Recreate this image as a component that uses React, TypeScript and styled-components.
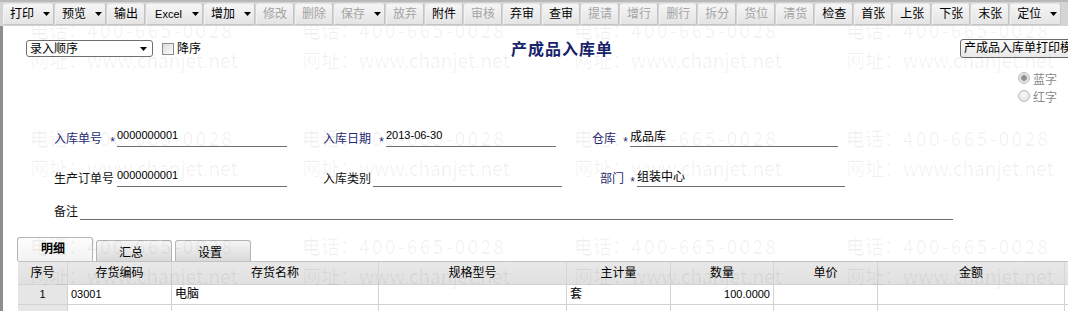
import React from 'react';
import styled, { createGlobalStyle } from 'styled-components';

const GlobalStyle = createGlobalStyle`
  html, body {
    margin: 0;
    padding: 0;
    background: #fff;
  }
  body {
    font-family: "Liberation Sans", "Noto Sans CJK SC", sans-serif;
    font-size: 12px;
    color: #000;
  }
`;

const Page = styled.div`
  position: relative;
  width: 1068px;
  height: 311px;
  overflow: hidden;
  background: #fff;
`;

/* ---------- toolbar ---------- */

const Toolbar = styled.div`
  position: relative;
  z-index: 2;
  display: flex;
  gap: 1px;
  height: 22px;
  padding: 3px 0 1px 3px;
  background: linear-gradient(#b9b9b9 0 2px, #d4d4d4 2px);
  white-space: nowrap;
`;

const ToolButton = styled.div<{ $disabled?: boolean; $arrow?: boolean }>`
  flex: none;
  display: flex;
  align-items: center;
  box-sizing: border-box;
  height: 22px;
  padding: 0 ${p => (p.$arrow ? 3 : 6)}px 0 6px;
  border: 1px solid #c4c4c4;
  border-top-color: #e4e4e4;
  border-left-color: #f2f2f2;
  border-radius: 3px 3px 2px 2px;
  background: linear-gradient(#f6f6f6, #e4e4e4);
  color: ${p => (p.$disabled ? '#a4a4a4' : '#000')};
  line-height: 14px;
`;

const ToolText = styled.span<{ $latin?: boolean }>`
  font-size: ${p => (p.$latin ? 11 : 12)}px;
  margin: ${p => (p.$latin ? '0 1px 0 2px' : '0')};
`;

const ArrowIcon = styled.svg`
  flex: none;
  margin-left: 9px;
`;

const Arrow = () => (
  <ArrowIcon width="7" height="4" viewBox="0 0 7 4">
    <path d="M0 0h7L3.5 4z" fill="#000" />
  </ArrowIcon>
);

/* ---------- body ---------- */

const Body = styled.div`
  height: 285px;
  border-left: 3px solid #8e8e8e;
  display: flex;
  flex-direction: column;
`;

const HeaderRow = styled.div`
  display: grid;
  grid-template-columns: 484px 450px 1fr;
  align-items: center;
  height: 20px;
  margin-top: 13px;
  padding-left: 23px;
  white-space: nowrap;
`;

const LeftGroup = styled.div`
  display: flex;
  align-items: center;
`;

const SelectBox = styled.div`
  display: flex;
  align-items: center;
  justify-content: space-between;
  box-sizing: border-box;
  width: 127px;
  height: 17px;
  padding-left: 3px;
  border: 1px solid #6f6f6f;
  border-radius: 3px;
  background: #fff;
  line-height: 14px;
  svg {
    margin-right: 5px;
  }
`;

const CheckBox = styled.span`
  display: inline-block;
  box-sizing: border-box;
  width: 12px;
  height: 12px;
  margin-left: 9px;
  border: 1px solid #8c8c8c;
  background: linear-gradient(135deg, #dcdcdc, #fbfbfb);
`;

const CheckLabel = styled.span`
  margin-left: 3px;
  line-height: 14px;
`;

const Title = styled.div`
  font-family: "Noto Sans CJK SC", sans-serif;
  font-size: 16px;
  font-weight: 700;
  letter-spacing: 1px;
  color: #17236b;
  line-height: 20px;
  padding-left: 1px;
  margin-top: -1px;
`;

const TemplateButton = styled.div`
  box-sizing: border-box;
  width: 130px;
  height: 19px;
  padding-left: 3px;
  border: 1px solid #6a6a6a;
  border-radius: 3px;
  background: linear-gradient(#fafafa, #e9e9e9);
  line-height: 17px;
  white-space: nowrap;
  overflow: hidden;
`;

const RadioGroup = styled.div`
  align-self: flex-end;
  display: flex;
  flex-direction: column;
  margin-top: 11px;
  margin-right: 11px;
`;

const RadioRow = styled.div`
  display: flex;
  align-items: center;
  height: 18px;
  color: #8a8a8a;
`;

const RadioDot = styled.span<{ $checked?: boolean }>`
  display: inline-block;
  box-sizing: border-box;
  width: 12px;
  height: 12px;
  margin-right: 3px;
  border-radius: 50%;
  border: 1px solid #bdbdbd;
  background: ${p =>
    p.$checked
      ? 'radial-gradient(circle, #8f8f8f 0 2.5px, #d6d6d6 3px, #f4f4f4 6px)'
      : 'radial-gradient(circle at 50% 40%, #fbfbfb, #dadada)'};
`;

/* ---------- form fields ---------- */

const FormArea = styled.div`
  display: flex;
  flex-direction: column;
  margin-top: 24px;
`;

const FormRow = styled.div<{ $gap: number }>`
  display: grid;
  grid-template-columns: 269px 269px auto;
  height: 18px;
  padding-left: 51px;
  margin-top: ${p => p.$gap}px;
`;

const Field = styled.div<{ $indent?: number; $span?: boolean }>`
  display: flex;
  align-items: flex-end;
  padding-left: ${p => p.$indent || 0}px;
  grid-column: ${p => (p.$span ? '1 / -1' : 'auto')};
`;

const FieldLabel = styled.div<{ $w: number; $req?: boolean }>`
  display: flex;
  justify-content: space-between;
  width: ${p => p.$w}px;
  flex: none;
  line-height: 14px;
  padding-bottom: 1px;
  white-space: nowrap;
  color: ${p => (p.$req ? '#1f2b72' : '#111')};
`;

const Star = styled.span`
  color: #1f2b72;
  margin-right: 2px;
  position: relative;
  top: 3px;
`;

const FieldInput = styled.div<{ $w: number }>`
  flex: none;
  box-sizing: border-box;
  width: ${p => p.$w}px;
  height: 18px;
  border-bottom: 1px solid #6e6e6e;
  font-size: 11px;
  line-height: 12px;
  white-space: nowrap;
  span.cjk {
    font-size: 12px;
    line-height: 16px;
  }
`;

/* ---------- tabs & grid ---------- */

const TabBar = styled.div`
  display: flex;
  align-items: flex-end;
  gap: 3px;
  height: 24px;
  margin-top: 17px;
  padding-left: 14px;
`;

const Tab = styled.div<{ $active?: boolean }>`
  box-sizing: border-box;
  width: 76px;
  height: ${p => (p.$active ? 24 : 21)}px;
  padding: ${p => (p.$active ? '4px 0 0 23px' : '5px 0 0 22px')};
  border: 1px solid #b4b4b4;
  border-bottom: none;
  border-radius: 3px 3px 0 0;
  background: ${p =>
    p.$active ? 'linear-gradient(#fdfdfd, #f2f2f2)' : 'linear-gradient(#f6f6f6, #d9d9d9)'};
  font-weight: ${p => (p.$active ? 700 : 400)};
  line-height: 14px;
`;

const COLS = '50px 104px 207px 188px 104px 103px 104px 187px 1fr';

const Grid = styled.div`
  margin-left: 15px;
  border-top: 1px solid #c2c2c2;
`;

const GridRow = styled.div<{ $header?: boolean }>`
  display: grid;
  grid-template-columns: ${COLS};
  height: ${p => (p.$header ? 23 : 20)}px;
  background: ${p => (p.$header ? 'linear-gradient(#e8e8e8, #e0e0e0)' : '#fff')};
`;

const Cell = styled.div<{ $align?: 'left' | 'center' | 'right'; $shade?: boolean; $header?: boolean }>`
  box-sizing: border-box;
  padding: 0 3px;
  border-right: 1px solid ${p => (p.$header ? '#d6d6d6' : '#d3d3d3')};
  border-bottom: 1px solid #d3d3d3;
  background: ${p => (p.$shade ? '#e6e6e6' : 'transparent')};
  text-align: ${p => p.$align || 'left'};
  line-height: ${p => (p.$header ? 22 : 19)}px;
  white-space: nowrap;
  overflow: hidden;
`;

const Num = styled.span`
  font-size: 11px;
`;

/* ---------- watermark ---------- */

const Watermark = styled.div`
  position: absolute;
  inset: 0;
  z-index: 1;
  pointer-events: none;
  display: grid;
  grid-template-columns: repeat(4, 272px);
  grid-auto-rows: 108px;
  padding: 15px 0 0 30px;
  font-family: "Noto Sans CJK SC", sans-serif;
  font-size: 19px;
  line-height: 30px;
  color: rgba(0, 0, 0, 0.06);
  white-space: nowrap;
`;

const MarkDigits = styled.span`
  letter-spacing: 2.4px;
`;

const tools: { label: string; disabled?: boolean; arrow?: boolean; latin?: boolean }[] = [
  { label: '打印', arrow: true },
  { label: '预览', arrow: true },
  { label: '输出' },
  { label: 'Excel', arrow: true, latin: true },
  { label: '增加', arrow: true },
  { label: '修改', disabled: true },
  { label: '删除', disabled: true },
  { label: '保存', arrow: true, disabled: true },
  { label: '放弃', disabled: true },
  { label: '附件' },
  { label: '审核', disabled: true },
  { label: '弃审' },
  { label: '查审' },
  { label: '提请', disabled: true },
  { label: '增行', disabled: true },
  { label: '删行', disabled: true },
  { label: '拆分', disabled: true },
  { label: '货位', disabled: true },
  { label: '清货', disabled: true },
  { label: '检查' },
  { label: '首张' },
  { label: '上张' },
  { label: '下张' },
  { label: '末张' },
  { label: '定位', arrow: true },
];

const headers = ['序号', '存货编码', '存货名称', '规格型号', '主计量', '数量', '单价', '金额', ''];

export default function App() {
  return (
    <Page>
      <GlobalStyle />
      <Toolbar>
        {tools.map(t => (
          <ToolButton key={t.label} $disabled={t.disabled} $arrow={t.arrow}>
            <ToolText $latin={t.latin}>{t.label}</ToolText>
            {t.arrow && <Arrow />}
          </ToolButton>
        ))}
      </Toolbar>

      <Body>
        <HeaderRow>
          <LeftGroup>
            <SelectBox>
              录入顺序
              <svg width="7" height="4" viewBox="0 0 7 4">
                <path d="M0 0h7L3.5 4z" fill="#000" />
              </svg>
            </SelectBox>
            <CheckBox />
            <CheckLabel>降序</CheckLabel>
          </LeftGroup>
          <Title>产成品入库单</Title>
          <TemplateButton>产成品入库单打印模版</TemplateButton>
        </HeaderRow>

        <RadioGroup>
          <RadioRow>
            <RadioDot $checked />
            蓝字
          </RadioRow>
          <RadioRow>
            <RadioDot />
            红字
          </RadioRow>
        </RadioGroup>

        <FormArea>
          <FormRow $gap={0}>
            <Field>
              <FieldLabel $w={63} $req>
                入库单号<Star>*</Star>
              </FieldLabel>
              <FieldInput $w={170}>0000000001</FieldInput>
            </Field>
            <Field>
              <FieldLabel $w={63} $req>
                入库日期<Star>*</Star>
              </FieldLabel>
              <FieldInput $w={170}>2013-06-30</FieldInput>
            </Field>
            <Field>
              <FieldLabel $w={38} $req>
                仓库<Star>*</Star>
              </FieldLabel>
              <FieldInput $w={208}>
                <span className="cjk">成品库</span>
              </FieldInput>
            </Field>
          </FormRow>
          <FormRow $gap={22}>
            <Field>
              <FieldLabel $w={63}>生产订单号</FieldLabel>
              <FieldInput $w={170}>0000000001</FieldInput>
            </Field>
            <Field>
              <FieldLabel $w={50}>入库类别</FieldLabel>
              <FieldInput $w={189} />
            </Field>
            <Field $indent={8}>
              <FieldLabel $w={37} $req>
                部门<Star>*</Star>
              </FieldLabel>
              <FieldInput $w={208}>
                <span className="cjk">组装中心</span>
              </FieldInput>
            </Field>
          </FormRow>
          <FormRow $gap={15}>
            <Field $span>
              <FieldLabel $w={26}>备注</FieldLabel>
              <FieldInput $w={873} />
            </Field>
          </FormRow>
        </FormArea>

        <TabBar>
          <Tab $active>明细</Tab>
          <Tab>汇总</Tab>
          <Tab>设置</Tab>
        </TabBar>

        <Grid>
          <GridRow $header>
            {headers.map((h, i) => (
              <Cell key={i} $header $align="center">
                {h}
              </Cell>
            ))}
          </GridRow>
          <GridRow>
            <Cell $shade $align="center">
              <Num>1</Num>
            </Cell>
            <Cell>
              <Num>03001</Num>
            </Cell>
            <Cell>电脑</Cell>
            <Cell />
            <Cell>套</Cell>
            <Cell $align="right">
              <Num>100.0000</Num>
            </Cell>
            <Cell />
            <Cell />
            <Cell />
          </GridRow>
          <GridRow>
            <Cell $shade />
            <Cell />
            <Cell />
            <Cell />
            <Cell />
            <Cell />
            <Cell />
            <Cell />
            <Cell />
          </GridRow>
        </Grid>
      </Body>

      <Watermark>
        {Array.from({ length: 12 }).map((_, i) => (
          <div key={i}>
            <div>
              电话：<MarkDigits>400-665-0028</MarkDigits>
            </div>
            <div>网址：www.chanjet.net</div>
          </div>
        ))}
      </Watermark>
    </Page>
  );
}
